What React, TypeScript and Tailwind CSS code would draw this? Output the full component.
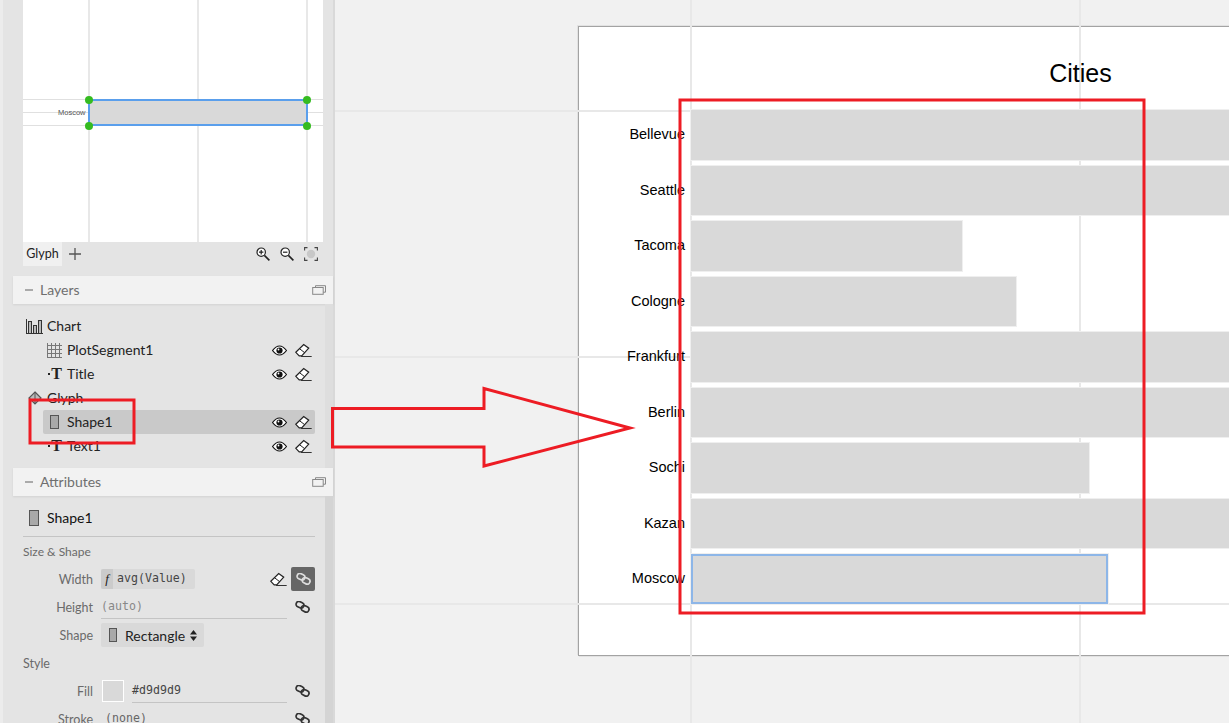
import React from "react";

const Eye = () => (
  <svg width="15" height="11" viewBox="0 0 15 11" className="shrink-0">
    <path d="M.5 5.500C3 2.200 5.200 1 7.500 1s4.500 1.200 7 4.500c-2.500 3.300-4.700 4.500-7 4.500S3 8.800.5 5.500Z" fill="#fff" stroke="#111" strokeWidth="1.200" />
    <circle cx="7.500" cy="5.500" r="3.100" fill="#111" />
    <circle cx="6.500" cy="4.500" r=".9" fill="#fff" />
  </svg>
);
const Eraser = () => (
  <svg width="17" height="15" viewBox="0 0 17 15" className="shrink-0">
    <path d="M.8 9.300 8.700 1.600l5 3.600-7 7.600H4.200Z" fill="#fff" stroke="#222" strokeWidth="1.200" />
    <path d="M4.500 5.700 9.700 9.700" stroke="#222" strokeWidth="1" />
    <path d="M6 13.500h10.700" stroke="#333" strokeWidth="1" />
  </svg>
);
const LinkIcon = ({ color = "#333" }: { color?: string }) => (
  <svg width="15" height="12" viewBox="0 0 15 12" className="shrink-0">
    <g fill="none" stroke={color} strokeWidth="1.700">
      <rect x="0.900" y="1" width="8" height="5.600" rx="2.800" transform="rotate(25 5 4)" />
      <rect x="6" y="5" width="8" height="5.600" rx="2.800" transform="rotate(25 10 8)" />
    </g>
  </svg>
);
const Collapse = () => (
  <svg width="14" height="10" viewBox="0 0 14 10" className="shrink-0">
    <path d="M3.500 2.500V.7h10v6.500h-2.500" fill="none" stroke="#888" strokeWidth="1" />
    <rect x=".7" y="2.500" width="10.500" height="6.800" fill="#f2f2f2" stroke="#888" strokeWidth="1" />
  </svg>
);
const RectIcon = ({ w = 9, h = 14 }: { w?: number; h?: number }) => (
  <span style={{ width: w, height: h }} className="block shrink-0 border border-[#555] bg-[#a9a9a9]" />
);
const TIcon = () => (
  <span className="flex w-[15px] shrink-0 items-center justify-end text-[#222]">
    <span className="mr-[1px] h-[2px] w-[2px] bg-[#222]" />
    <span className="font-['Liberation_Serif',serif] text-[16px] font-bold leading-none">T</span>
  </span>
);
const GridIcon = () => (
  <svg width="15" height="15" viewBox="0 0 15 15" className="shrink-0">
    <path d="M.5 0v15M4.500 0v15M8.500 0v15M12.500 0v15M0 2.500h15M0 6.500h15M0 10.500h15M0 14.500h15" stroke="#777" strokeWidth="1" />
  </svg>
);
const ChartIcon = () => (
  <svg width="17" height="15" viewBox="0 0 17 15" className="shrink-0">
    <path d="M.5 0v15M0 14.500h17" stroke="#333" />
    <g fill="#bbb" stroke="#333" strokeWidth="1">
      <rect x="2.500" y="2.500" width="3" height="12" />
      <rect x="7.500" y="6.500" width="3" height="8" />
      <rect x="12.500" y="1.500" width="3" height="13" />
    </g>
  </svg>
);
const DiamondIcon = () => (
  <svg width="14" height="14" viewBox="0 0 14 14" className="shrink-0">
    <path d="M7 1 13 7 7 13 1 7Z" fill="#bbb" stroke="#555" strokeWidth="1.200" />
    <path d="M7 1v12" stroke="#555" />
  </svg>
);
const Magnifier = ({ plus }: { plus: boolean }) => (
  <svg width="14" height="14" viewBox="0 0 14 14">
    <circle cx="5.200" cy="5.200" r="4.200" fill="#fff" stroke="#222" strokeWidth="1.200" />
    <path d="M8.400 8.400 13.400 13.400" stroke="#222" strokeWidth="1.600" />
    <path d={plus ? "M3 5.200h4.400M5.200 3v4.400" : "M3 5.200h4.400"} stroke="#222" strokeWidth="1.200" />
  </svg>
);
const FitIcon = () => (
  <svg width="14" height="14" viewBox="0 0 14 14">
    <circle cx="7" cy="7" r="4.200" fill="#c8c8c8" />
    <path d="M.6 3.500V.6h2.900M10.500.6h2.900v2.900M13.400 10.500v2.900h-2.900M3.500 13.400H.6v-2.900" fill="none" stroke="#444" strokeWidth="1.100" />
  </svg>
);

const Header = ({ title }: { title: string }) => (
  <div className="flex h-[28px] items-center bg-[#f2f2f2] pl-[12px] pr-[7px] text-[14px] text-[#6f6f6f] shadow-[0_1px_2px_rgba(0,0,0,0.08)]">
    <span className="mr-[7px] h-[2px] w-[8px] bg-[#aaa]" />
    <span className="flex-1 pb-[2px]">{title}</span>
    <Collapse />
  </div>
);

const Actions = () => (
  <span className="ml-auto flex items-center gap-[8px]">
    <Eye />
    <Eraser />
  </span>
);

const LayerRow = ({ icon, label, actions = true, selected }: { icon: React.ReactNode; label: string; actions?: boolean; selected?: boolean }) => (
  <div className={`flex h-[24px] items-center rounded-[2px] pl-[3px] pr-[3px] text-[14px] text-[#222] ${selected ? "bg-[#c9c9c9]" : ""}`}>
    <span className="mr-[4px] flex w-[17px] justify-center">{icon}</span>
    <span className="pb-[2px]">{label}</span>
    {actions && <Actions />}
  </div>
);

const AttrRow = ({ label, children }: { label: string; children: React.ReactNode }) => (
  <div className="flex h-[28px] items-center">
    <span className="w-[70px] shrink-0 pt-[2px] text-right text-[12.5px] text-[#6a6a6a]">{label}</span>
    <span className="ml-[8px] flex flex-1 items-center">{children}</span>
  </div>
);

const mono = "font-['DejaVu_Sans_Mono',monospace] text-[11.6px]";

const Sidebar = () => (
  <div className="flex h-full w-[335px] shrink-0 border-r-2 border-[#d9d9d9] bg-[#e4e4e4]">
    <div className="h-full w-[3px] bg-[#ececec]" />
    <div className="ml-[10px] flex h-full w-[320px] flex-col font-['Lato',sans-serif]">
      <div className="px-[10px]">
        <div className="relative h-[242px] w-[300px] overflow-hidden bg-white">
          <span className="absolute left-[65px] top-0 h-full w-[2px] bg-[#e8e8e8]" />
          <span className="absolute left-[174px] top-0 h-full w-[2px] bg-[#e8e8e8]" />
          <span className="absolute left-[283px] top-0 h-full w-[2px] bg-[#e8e8e8]" />
          <span className="absolute left-0 top-[99px] h-[1px] w-full bg-[#e0e0e0]" />
          <span className="absolute left-0 top-[112px] h-[1px] w-full bg-[#e0e0e0]" />
          <span className="absolute left-0 top-[125px] h-[1px] w-full bg-[#e0e0e0]" />
          <span className="absolute left-[35px] top-[107px] font-['Liberation_Sans',sans-serif] text-[7.5px] leading-[12px] text-[#555]">Moscow</span>
          <span className="absolute left-[65px] top-[99px] h-[27px] w-[220px] border-2 border-[#5a9fec] bg-[#d9d9d9]" />
          <span className="absolute left-[62px] top-[96px] h-[8px] w-[8px] rounded-full bg-[#35bb20]" />
          <span className="absolute left-[280px] top-[96px] h-[8px] w-[8px] rounded-full bg-[#35bb20]" />
          <span className="absolute left-[62px] top-[122px] h-[8px] w-[8px] rounded-full bg-[#35bb20]" />
          <span className="absolute left-[280px] top-[122px] h-[8px] w-[8px] rounded-full bg-[#35bb20]" />
        </div>
        <div className="flex h-[34px] items-start">
          <span className="flex h-[24px] w-[39px] items-center justify-center bg-[#f0f0f0] text-[12.5px] text-[#222]">Glyph</span>
          <svg width="12" height="12" viewBox="0 0 12 12" className="ml-[7px] mt-[6px]">
            <path d="M6 0v12M0 6h12" stroke="#555" strokeWidth="1.300" />
          </svg>
          <span className="ml-auto mr-[5px] mt-[5px] flex gap-[10px]">
            <Magnifier plus />
            <Magnifier plus={false} />
            <FitIcon />
          </span>
        </div>
      </div>
      <Header title="Layers" />
      <div className="flex h-[164px]">
        <div className="flex-1 px-[10px] pt-[10px]">
          <LayerRow icon={<ChartIcon />} label="Chart" actions={false} />
          <div className="pl-[20px]">
            <LayerRow icon={<GridIcon />} label="PlotSegment1" />
            <LayerRow icon={<TIcon />} label="Title" />
          </div>
          <LayerRow icon={<DiamondIcon />} label="Glyph" actions={false} />
          <div className="pl-[20px]">
            <LayerRow icon={<RectIcon />} label="Shape1" selected />
            <LayerRow icon={<TIcon />} label="Text1" />
          </div>
        </div>
        <div className="h-full w-[8px] bg-[#dedede]" />
      </div>
      <Header title="Attributes" />
      <div className="flex min-h-0 flex-1 overflow-hidden">
        <div className="flex-1 px-[10px]">
          <div className="flex h-[41px] items-center border-b border-[#c4c4c4] pl-[6px] pt-[3px] text-[14px] text-[#111]">
            <span className="flex w-[18px]"><RectIcon w={10} h={16} /></span>
            Shape1
          </div>
          <div className="flex h-[28px] items-center pt-[1px] text-[12px] text-[#6a6a6a]">Size &amp; Shape</div>
          <AttrRow label="Width">
            <span className={`flex h-[20px] w-[94px] items-center rounded-[2px] bg-[#d9d9d9] text-[#444] ${mono}`}>
              <span className="flex h-full w-[12px] items-center justify-center rounded-l-[2px] bg-[#cbcbcb] font-['Liberation_Serif',serif] text-[13px] italic text-[#222]">f</span>
              <span className="ml-[4px]">avg(Value)</span>
            </span>
            <span className="ml-auto flex items-center gap-[4px]">
              <Eraser />
              <span className="flex h-[24px] w-[24px] items-center justify-center rounded-[2px] bg-[#666]"><LinkIcon color="#ddd" /></span>
            </span>
          </AttrRow>
          <AttrRow label="Height">
            <span className={`flex h-[24px] w-[186px] items-center border-b border-[#c4c4c4] pt-[1px] text-[#888] ${mono}`}>(auto)</span>
            <span className="ml-auto mr-[5px]"><LinkIcon /></span>
          </AttrRow>
          <AttrRow label="Shape">
            <span className="flex h-[24px] w-[103px] items-center rounded-[2px] bg-[#d9d9d9] pl-[8px] text-[14px] text-[#222]">
              <RectIcon w={8} h={14} />
              <span className="ml-[8px]">Rectangle</span>
              <svg width="7" height="11" viewBox="0 0 7 11" className="ml-[5px]">
                <path d="M3.500 0 7 4.400H0ZM3.500 11 0 6.600h7Z" fill="#222" />
              </svg>
            </span>
          </AttrRow>
          <div className="flex h-[28px] items-center pt-[2px] text-[12.5px] text-[#6a6a6a]">Style</div>
          <AttrRow label="Fill">
            <span className="ml-[1px] h-[22px] w-[22px] border border-white bg-[#d9d9d9]" />
            <span className={`ml-[8px] flex h-[24px] w-[155px] items-center border-b border-[#c4c4c4] text-[#444] ${mono}`}>#d9d9d9</span>
            <span className="ml-auto mr-[5px]"><LinkIcon /></span>
          </AttrRow>
          <AttrRow label="Stroke">
            <span className={`ml-[4px] text-[#666] ${mono}`}>(none)</span>
            <span className="ml-auto mr-[5px]"><LinkIcon /></span>
          </AttrRow>
        </div>
        <div className="h-full w-[8px] bg-[#d4d4d4]" />
      </div>
    </div>
  </div>
);

const rows = [
  { city: "Bellevue", bar: "w-[600px]" },
  { city: "Seattle", bar: "w-[600px]" },
  { city: "Tacoma", bar: "w-[271px]" },
  { city: "Cologne", bar: "w-[325px]" },
  { city: "Frankfurt", bar: "w-[600px]" },
  { city: "Berlin", bar: "w-[600px]" },
  { city: "Sochi", bar: "w-[398px]" },
  { city: "Kazan", bar: "w-[600px]" },
  { city: "Moscow", bar: "w-[417px] border-2 border-[#8db6e8]" },
];

const Canvas = () => (
  <div className="relative h-full min-w-0 flex-1 overflow-hidden bg-[#f1f1f1] pl-[243px] pt-[26px]">
    <div className="flex h-[630px] w-[900px] flex-col border border-[#a3a3a3] bg-white font-['Liberation_Sans',sans-serif] shadow-[-1px_-1px_0_#e2e2e2,1px_1px_0_#e2e2e2]">
      <div className="relative z-10 flex h-[83px] w-[1003px] justify-center pt-[31px] text-[25px] leading-[30px] text-black">
        <span>Cities</span>
      </div>
      <div className="relative z-10 flex flex-col gap-[6px]">
        {rows.map((r) => (
          <div key={r.city} className="flex h-[49.5px] items-center">
            <span className="w-[106px] shrink-0 pt-[1px] text-right text-[14.5px] text-black">{r.city}</span>
            <span className={`ml-[6px] h-full bg-[#d9d9d9] shadow-[0_0_0_1px_#efefef] ${r.bar}`} />
          </div>
        ))}
      </div>
    </div>
    <span className="absolute left-0 top-[110px] h-[2px] w-full bg-[#e8e8e8]" />
    <span className="absolute left-0 top-[356px] h-[2px] w-full bg-[#e8e8e8]" />
    <span className="absolute left-0 top-[603px] h-[2px] w-full bg-[#e8e8e8]" />
    <span className="absolute left-[355px] top-0 h-full w-[2px] bg-[#e8e8e8]" />
    <span className="absolute left-[744px] top-0 h-full w-[2px] bg-[#e8e8e8]" />
  </div>
);

export default function App() {
  return (
    <div className="relative flex h-[723px] w-[1229px] overflow-hidden">
      <Sidebar />
      <Canvas />
      <svg width="1229" height="723" viewBox="0 0 1229 723" className="pointer-events-none absolute left-0 top-0 z-20">
        <g fill="none" stroke="#ed1c24" strokeWidth="3">
          <rect x="680" y="100" width="464" height="513" />
          <rect x="30" y="400" width="104" height="43" />
          <path d="M332.500 408.500H484V388.500L630 428 484 466V447H332.500Z" />
        </g>
      </svg>
    </div>
  );
}
